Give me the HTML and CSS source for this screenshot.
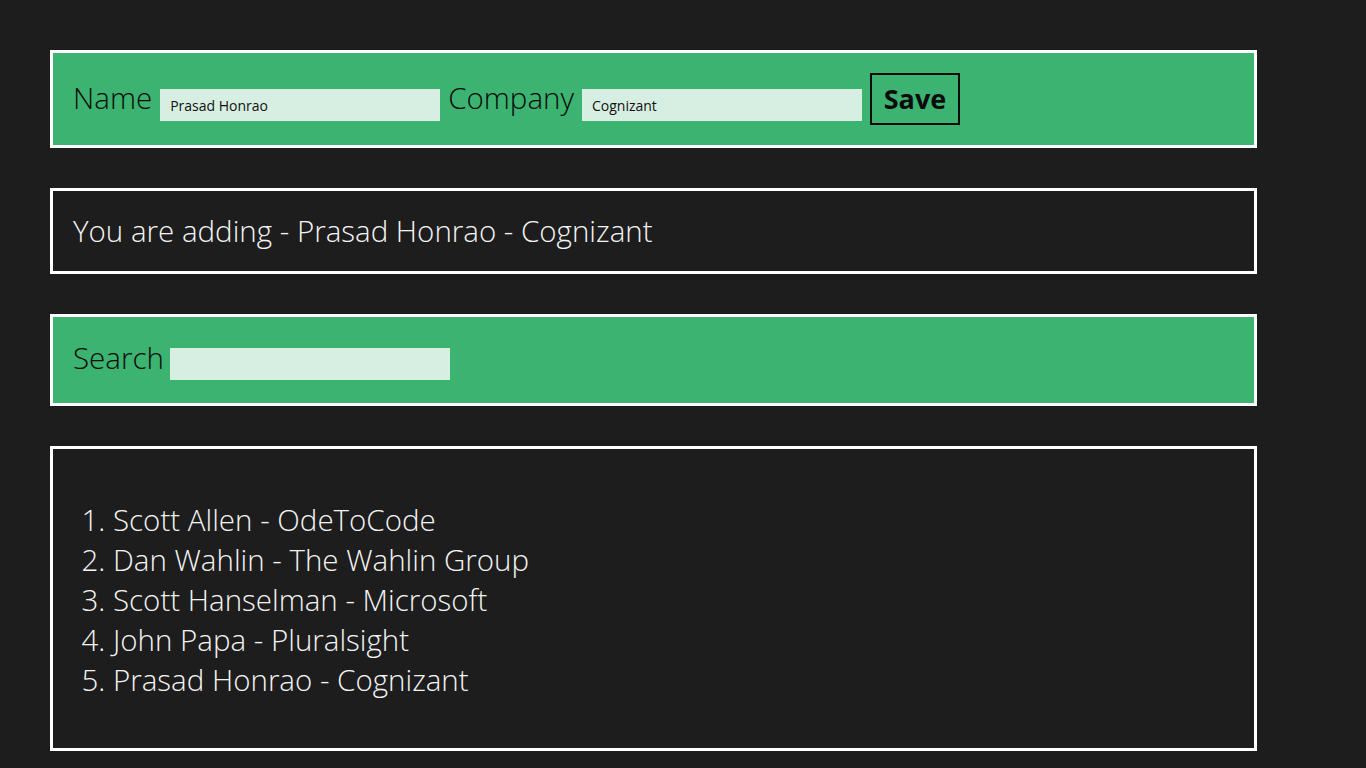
FILE: index.html
```html
<!DOCTYPE html>
<html>
<head>
<meta charset="utf-8">
<link rel="stylesheet" href="styles.css">
</head>
<body>
<div class="page">
  <section class="panel green form-row">
    <label class="label">Name</label>
    <input class="field" type="text" value="Prasad Honrao">
    <label class="label">Company</label>
    <input class="field" type="text" value="Cognizant">
    <button class="save">Save</button>
  </section>
  <section class="panel dark status">You are adding - Prasad Honrao - Cognizant</section>
  <section class="panel green search-row">
    <label class="label">Search</label>
    <input class="field" type="text" value="">
  </section>
  <section class="panel dark list-panel">
    <ol class="people">
      <li>Scott Allen - OdeToCode</li>
      <li>Dan Wahlin - The Wahlin Group</li>
      <li>Scott Hanselman - Microsoft</li>
      <li>John Papa - Pluralsight</li>
      <li>Prasad Honrao - Cognizant</li>
    </ol>
  </section>
</div>
</body>
</html>
```

FILE: styles.css
```css
html, body {
  margin: 0;
  padding: 0;
  background: #1d1d1d;
}
body {
  font-family: "Open Sans", "Noto Sans", sans-serif;
  font-weight: 330;
  padding: 50px 0 0 50px;
}
.page {
  width: 1207px;
  display: flex;
  flex-direction: column;
  gap: 40px;
}
.panel {
  border: 3px solid #ffffff;
  padding: 20px;
  font-size: 29.5px;
}
.green {
  background: #3cb371;
  color: #0b0b0b;
}
.dark {
  background: #1d1d1d;
  color: #f4f4f4;
}
.form-row, .search-row {
  display: flex;
  align-items: baseline;
}
.form-row {
  gap: 8px;
}
.search-row {
  gap: 6px;
  padding-top: 22px;
  padding-bottom: 23px;
}
.label {
  line-height: 38px;
}
.field {
  width: 280px;
  height: 32px;
  box-sizing: border-box;
  border: none;
  outline: none;
  margin: 0;
  padding: 0 10px;
  background: #d7efe2;
  font-family: "Open Sans", "Noto Sans", sans-serif;
  font-size: 14px;
  font-weight: 400;
  color: #111;
}
.form-row .field {
  position: relative;
  top: 2px;
}
.save {
  width: 90px;
  height: 52px;
  box-sizing: border-box;
  border: 2px solid #0b0b0b;
  background: transparent;
  margin: 0;
  padding: 0 0 2px 0;
  font-family: "Open Sans", "Noto Sans", sans-serif;
  font-size: 27px;
  font-weight: 700;
  color: #0b0b0b;
}
.status {
  line-height: 40px;
}
.people {
  margin: 31px 0 28px;
  padding-left: 40px;
  line-height: 40px;
}
```
